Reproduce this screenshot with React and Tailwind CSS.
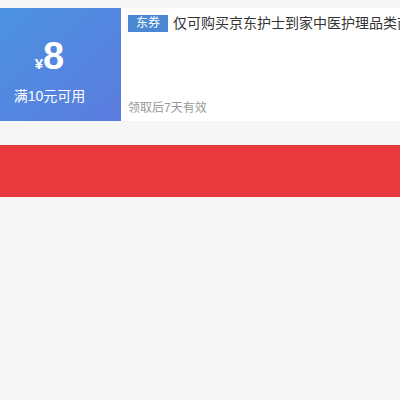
import React from 'react';

const Coupon = () => (
    <div className="flex h-[113px] bg-white">
        <div className="w-[121px] shrink-0 flex flex-col items-center justify-center pr-[22px] text-white bg-gradient-to-br from-[#4a92e0] to-[#5b7ce0]">
            <div className="flex items-baseline leading-none mt-[10px]">
                <span className="text-[15px] font-bold">¥</span>
                <span className="text-[38px] font-bold" style={{ fontFamily: 'Arial, "Liberation Sans", sans-serif' }}>8</span>
            </div>
            <p className="mt-[14px] text-[14px] leading-none whitespace-nowrap">满10元可用</p>
        </div>
        <div className="flex-1 min-w-0 flex flex-col justify-between pl-[7px] pt-[5px] pb-[5px]">
            <div className="flex items-center whitespace-nowrap overflow-hidden">
                <span className="shrink-0 bg-[#4a88d4] text-white text-[12px] leading-[17px] px-[8px]">东券</span>
                <span className="ml-[5px] text-[14px] text-[#333] leading-[20px]">仅可购买京东护士到家中医护理品类商品</span>
            </div>
            <p className="text-[12px] text-[#999] leading-[16px]">领取后7天有效</p>
        </div>
    </div>
);

export default function App() {
    return (
        <div className="min-h-[400px] bg-[#f6f6f6] pt-[8px]" style={{ fontFamily: '"Liberation Sans", "Noto Sans CJK SC", sans-serif' }}>
            <Coupon />
            <div className="mt-[24px] h-[52px] bg-[#e93b3f] border-t border-[#d8383d]" />
        </div>
    );
}
